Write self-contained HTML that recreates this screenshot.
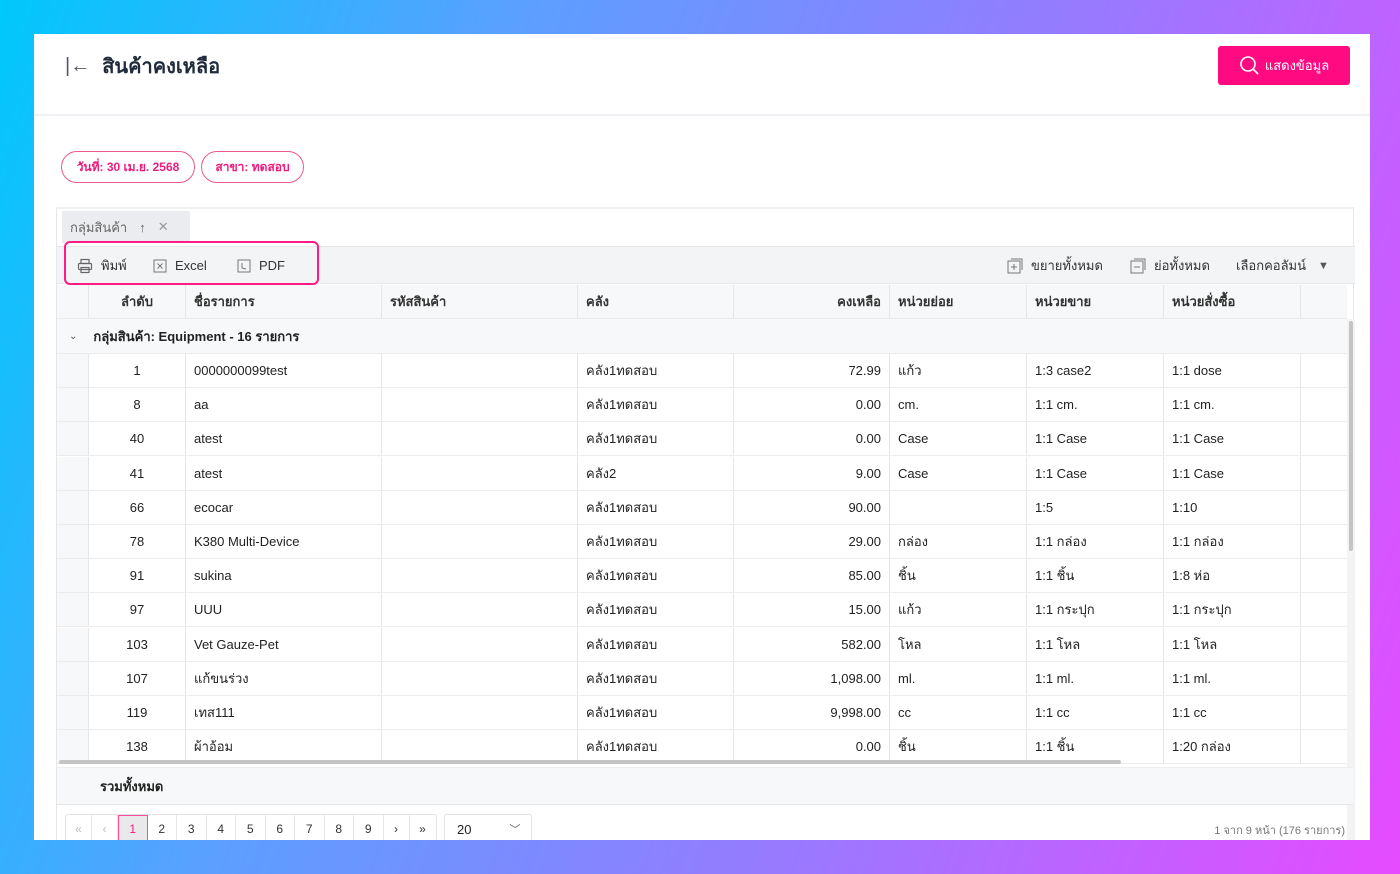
<!DOCTYPE html>
<html><head><meta charset="utf-8"><style>
*{box-sizing:border-box;margin:0;padding:0}
body{width:1400px;height:874px;overflow:hidden;position:relative;font-family:"Liberation Sans","Noto Sans CJK SC",sans-serif;color:#222;font-size:13px;
background:linear-gradient(110deg,#00c8fb 0%,#5aa0ff 30%,#9a78ff 65%,#e64bff 100%)}
.card{position:absolute;left:34px;top:34px;width:1336px;height:806px;background:#fff;overflow:hidden}
.abs{position:absolute}
.title{left:31px;top:16px;font-size:20px;font-weight:bold;color:#1f2a3a;display:flex;align-items:center;gap:12px}
.btn{left:1184px;top:12px;width:132px;height:39px;background:#ff0a80;border-radius:3px;color:#fff;font-size:13px;display:flex;align-items:center;justify-content:center;gap:4px}
.hr{left:0;top:80px;width:1336px;height:2px;background:#f0f2f5}
.pill{top:117px;height:32px;border:1.5px solid #f0568f;border-radius:16px;color:#ee1c7c;font-size:12px;font-weight:bold;display:flex;align-items:center;justify-content:center}
.grid{left:22px;top:173px;width:1298px;height:640px;border:1px solid #e5e7eb;border-top:2px solid #eef0f2}
.chip{left:5px;top:2px;width:128px;height:32px;background:#ebecef;color:#666;display:flex;align-items:center;padding-left:8px;gap:12px;font-size:13px}
.tb{left:0;top:37px;width:1298px;height:38px;background:#f3f4f6;border-top:1px solid #e5e7eb;border-bottom:1px solid #e5e7eb}
.hl{left:7px;top:-6px;width:255px;height:44px;border:2.5px solid #ff1a85;border-radius:6px}
.ti{display:flex;align-items:center;gap:8px;font-size:13px;color:#333;height:18px;line-height:18px}
.row{position:absolute;left:0;width:1290px;height:34px;border-bottom:1px solid #ececec}
.c{position:absolute;top:0;height:100%;display:flex;align-items:center;border-left:1px solid #e6e6e6;padding:0 8px;white-space:nowrap}
.hdr .c{font-weight:bold;color:#333;background:#f7f8f9}
.r{justify-content:flex-end}
.ctr{justify-content:center}
.pg{display:flex;position:absolute;left:8px;top:605px;border:1px solid #e3e3e3;border-radius:3px;height:30px}
.pg div{width:29.5px;display:flex;align-items:center;justify-content:center;border-right:1px solid #e6e6e6;font-size:12px;color:#333}
.pg div.a{width:26px}
</style></head><body>
<div class="card">
 <div class="abs title"><span style="font-weight:normal;color:#556;font-size:20px">|←</span><span>สินค้าคงเหลือ</span></div>
 <div class="abs btn"><svg width="22" height="22" viewBox="0 0 22 22"><circle cx="9" cy="9" r="7" fill="none" stroke="#fff" stroke-width="1.6"/><path d="M14 14l5 5" stroke="#fff" stroke-width="1.6"/></svg>แสดงข้อมูล</div>
 <div class="abs hr"></div>
 <div class="abs pill" style="left:27px;width:134px">วันที่: 30 เม.ย. 2568</div>
 <div class="abs pill" style="left:167px;width:103px">สาขา: ทดสอบ</div>
 <div class="abs grid">
  <div class="abs chip">กลุ่มสินค้า <span>↑</span><span style="color:#999">✕</span></div>
  <div class="abs tb">
   <div class="abs hl"></div>
   <div class="abs ti" style="left:20px;top:10px"><svg width="16" height="16" viewBox="0 0 16 16" fill="none" stroke="#666" stroke-width="1.2"><rect x="4" y="1.5" width="8" height="4"/><rect x="1.5" y="5.5" width="13" height="6" rx="1"/><rect x="4" y="9.5" width="8" height="5"/></svg>พิมพ์</div>
   <div class="abs ti" style="left:96px;top:10px"><svg width="14" height="14" viewBox="0 0 14 14" fill="none" stroke="#777"><rect x="1" y="1" width="12" height="12"/><path d="M4.5 4.5l5 5M9.5 4.5l-5 5"/></svg>Excel</div>
   <div class="abs ti" style="left:180px;top:10px"><svg width="14" height="14" viewBox="0 0 14 14" fill="none" stroke="#777"><rect x="1" y="1" width="12" height="12"/><path d="M5 4v5l4 1"/></svg>PDF</div>
   <div class="abs ti" style="left:950px;top:10px"><svg width="16" height="16" viewBox="0 0 16 16" fill="none" stroke="#777"><rect x="1" y="3" width="12" height="12"/><path d="M4 1h11v11M7 6v6M4 9h6"/></svg>ขยายทั้งหมด</div>
   <div class="abs ti" style="left:1073px;top:10px"><svg width="16" height="16" viewBox="0 0 16 16" fill="none" stroke="#777"><rect x="1" y="3" width="12" height="12"/><path d="M4 1h11v11M4 9h6"/></svg>ย่อทั้งหมด</div>
   <div class="abs ti" style="left:1179px;top:10px">เลือกคอลัมน์ <span style="color:#555;font-size:11px;margin-left:4px">▼</span></div>
  </div>
  <div class="abs" style="left:0;top:76px;width:1298px;height:556px;overflow:hidden" id="t">
   <div class="row hdr" style="top:0;height:34px;background:#f7f8f9">
    <div class="c" style="left:0;width:31px;border-left:0"></div>
    <div class="c ctr" style="left:31px;width:97px">ลำดับ</div>
    <div class="c" style="left:128px;width:196px">ชื่อรายการ</div>
    <div class="c" style="left:324px;width:196px">รหัสสินค้า</div>
    <div class="c" style="left:520px;width:156px">คลัง</div>
    <div class="c r" style="left:676px;width:156px">คงเหลือ</div>
    <div class="c" style="left:832px;width:137px">หน่วยย่อย</div>
    <div class="c" style="left:969px;width:137px">หน่วยขาย</div>
    <div class="c" style="left:1106px;width:137px">หน่วยสั่งซื้อ</div>
    <div class="c" style="left:1243px;width:47px"></div>
   </div>
   <div class="row" style="top:34px;height:35px;background:#f7f8f9;font-weight:bold;display:flex;align-items:center;padding-left:12px;gap:16px"><span style="font-weight:normal;font-size:10px;color:#555">⌄</span>กลุ่มสินค้า: Equipment - 16 รายการ</div>
   <div id="rows"></div>
   <div class="abs" style="left:1290px;top:34px;width:8px;height:522px;background:#f3f3f3"><div style="margin:2px auto;width:4px;height:230px;background:#c4c4c4;border-radius:2px"></div></div>
   <div class="abs" style="left:2px;top:475px;width:1062px;height:4px;background:#c4c4c4;border-radius:2px"></div>
  </div>
  <div class="abs" style="left:0;top:558px;width:1296px;height:38px;background:#f7f8f9;border-top:1px solid #eee;border-bottom:1px solid #e5e7eb;font-weight:bold;display:flex;align-items:center;padding-left:43px">รวมทั้งหมด</div>
  <div class="pg"><div class="a" style="color:#bbb">«</div><div class="a" style="color:#bbb">‹</div><div style="background:#e9e9ec;color:#ee1c7c;border:1.5px solid #ff4a9c">1</div><div>2</div><div>3</div><div>4</div><div>5</div><div>6</div><div>7</div><div>8</div><div>9</div><div class="a">›</div><div class="a" style="border-right:0">»</div></div>
  <div class="abs" style="left:387px;top:605px;width:88px;height:30px;border:1px solid #e3e3e3;border-radius:3px;display:flex;align-items:center;padding-left:12px;gap:38px;font-size:13px">20<span style="color:#666;font-size:11px">﹀</span></div>
  <div class="abs" style="right:8px;top:612px;font-size:11px;color:#777">1 จาก 9 หน้า (176 รายการ)</div>
 </div>
</div>
<script>
var d=[["1","0000000099test","คลัง1ทดสอบ","72.99","แก้ว","1:3 case2","1:1 dose"],["8","aa","คลัง1ทดสอบ","0.00","cm.","1:1 cm.","1:1 cm."],["40","atest","คลัง1ทดสอบ","0.00","Case","1:1 Case","1:1 Case"],["41","atest","คลัง2","9.00","Case","1:1 Case","1:1 Case"],["66","ecocar","คลัง1ทดสอบ","90.00","","1:5","1:10"],["78","K380 Multi-Device","คลัง1ทดสอบ","29.00","กล่อง","1:1 กล่อง","1:1 กล่อง"],["91","sukina","คลัง1ทดสอบ","85.00","ชิ้น","1:1 ชิ้น","1:8 ห่อ"],["97","UUU","คลัง1ทดสอบ","15.00","แก้ว","1:1 กระปุก","1:1 กระปุก"],["103","Vet Gauze-Pet","คลัง1ทดสอบ","582.00","โหล","1:1 โหล","1:1 โหล"],["107","แก้ขนร่วง","คลัง1ทดสอบ","1,098.00","ml.","1:1 ml.","1:1 ml."],["119","เทส111","คลัง1ทดสอบ","9,998.00","cc","1:1 cc","1:1 cc"],["138","ผ้าอ้อม","คลัง1ทดสอบ","0.00","ชิ้น","1:1 ชิ้น","1:20 กล่อง"]];
var h="";d.forEach(function(r,i){var t=69+i*34.2;h+='<div class="row" style="top:'+t+'px"><div class="c" style="left:0;width:31px;border-left:0;background:#f7f8f9"></div><div class="c ctr" style="left:31px;width:97px">'+r[0]+'</div><div class="c" style="left:128px;width:196px">'+r[1]+'</div><div class="c" style="left:324px;width:196px"></div><div class="c" style="left:520px;width:156px">'+r[2]+'</div><div class="c r" style="left:676px;width:156px">'+r[3]+'</div><div class="c" style="left:832px;width:137px">'+r[4]+'</div><div class="c" style="left:969px;width:137px">'+r[5]+'</div><div class="c" style="left:1106px;width:137px">'+r[6]+'</div><div class="c" style="left:1243px;width:47px"></div></div>'});
document.getElementById("rows").innerHTML=h;
</script>
</body></html>
